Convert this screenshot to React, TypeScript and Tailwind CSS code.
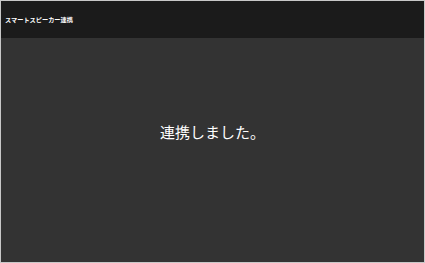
const App = () => {
  return (
    <div
      className="w-[425px] h-[263px] border border-[#c8c8c8] flex flex-col bg-[#333333]"
      style={{ fontFamily: '"Noto Sans CJK JP", "Noto Sans", sans-serif' }}
    >
      {/* header bar */}
      <div className="h-[37px] bg-[#1b1b1b] flex items-center px-[4px] pt-[2px]">
        <span className="text-[6.2px] font-bold text-white leading-none">スマートスピーカー連携</span>
      </div>
      <div className="flex-1 flex items-center justify-center pb-[38px]">
        <p className="text-[15px] text-white leading-none">連携しました。</p>
      </div>
    </div>
  );
};

export default App;
